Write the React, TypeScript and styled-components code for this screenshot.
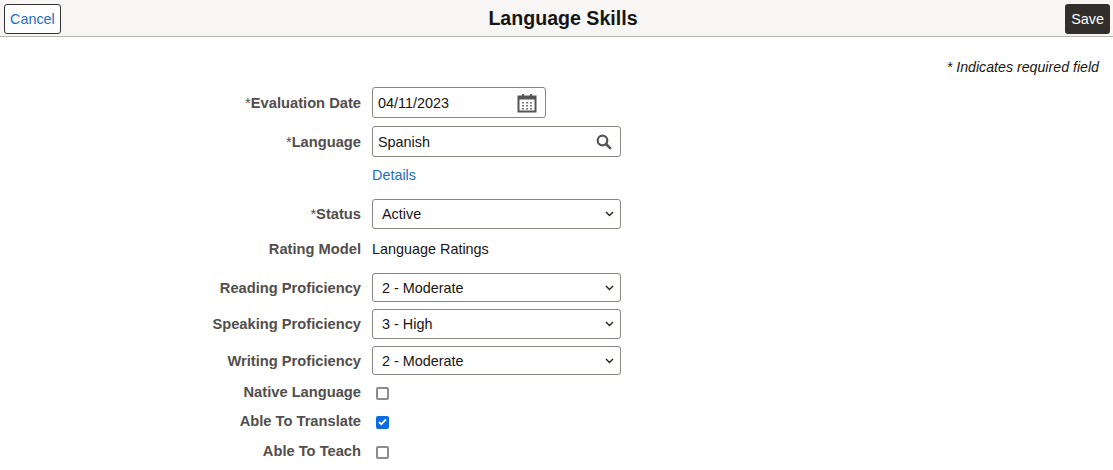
import React from 'react';
import styled, { createGlobalStyle } from 'styled-components';

const GlobalStyle = createGlobalStyle`
  html, body {
    margin: 0;
    padding: 0;
    background: #ffffff;
    font-family: "Liberation Sans", Arial, sans-serif;
    font-size: 14.4px;
    color: #000;
  }
`;

interface Option {
  label: string;
  required?: boolean;
}

const Header = styled.header`
  display: flex;
  align-items: center;
  height: 37px;
  padding: 0 3px 0 4px;
  background: #f7f6f5;
  border-bottom: 1px solid #b8b6b3;
  box-sizing: border-box;
`;

const CancelButton = styled.button`
  height: 30px;
  padding: 0 5px;
  margin-top: 1px;
  background: #ffffff;
  border: 1px solid #333333;
  border-radius: 3px;
  color: #1f6ec4;
  font-family: inherit;
  font-size: 14.4px;
`;

const SaveButton = styled.button`
  height: 30px;
  padding: 0 6px;
  margin-top: 1px;
  background: #312e2b;
  border: none;
  border-radius: 3px;
  color: #ffffff;
  font-family: inherit;
  font-size: 14.4px;
`;

const Title = styled.h1`
  flex: 1;
  margin: 0;
  text-align: center;
  font-size: 19.6px;
  font-weight: bold;
  color: #161513;
`;

const Note = styled.div`
  padding: 22px 14px 0 0;
  text-align: right;
  font-style: italic;
  font-size: 14.2px;
  color: #161513;
`;

const Form = styled.div`
  display: flex;
  flex-direction: column;
`;

const Row = styled.div<{ $top: number; $height: number }>`
  display: grid;
  grid-template-columns: 361px 1fr;
  column-gap: 11px;
  align-items: center;
  margin-top: ${(p) => p.$top}px;
  height: ${(p) => p.$height}px;
`;

const Label = styled.div`
  text-align: right;
  font-weight: bold;
  font-size: 14.7px;
  color: #514e4b;
  white-space: nowrap;
`;

const Star = styled.span`
  font-weight: normal;
`;

const Field = styled.div<{ $width: number }>`
  position: relative;
  display: flex;
  align-items: center;
  width: ${(p) => p.$width}px;
  height: 100%;
  box-sizing: border-box;
  border: 1px solid #8a8580;
  border-radius: 3px;
  background: #fff;
`;

const FieldText = styled.span<{ $pad: number }>`
  flex: 1;
  padding-left: ${(p) => p.$pad}px;
  color: #161513;
`;

const IconSlot = styled.span`
  display: flex;
  align-items: center;
  padding-right: 8px;
`;

const Chevron = styled.svg`
  position: absolute;
  right: 6px;
  top: 50%;
  margin-top: -3px;
`;

const Value = styled.span`
  color: #161513;
`;

const Link = styled.a`
  color: #1f6ec4;
  text-decoration: none;
`;

const Check = styled.span<{ $on?: boolean }>`
  display: inline-flex;
  align-items: center;
  justify-content: center;
  width: 13px;
  height: 13px;
  margin-left: 4px;
  vertical-align: middle;
  box-sizing: border-box;
  border-radius: 2px;
  border: ${(p) => (p.$on ? 'none' : '2px solid #8b8b93')};
  background: ${(p) => (p.$on ? '#0b6be0' : '#ffffff')};
`;

const Calendar = () => (
  <svg width="20" height="20" viewBox="0 0 20 20">
    <rect x="1.5" y="3.5" width="17" height="15" fill="none" stroke="#555" strokeWidth="2" />
    <rect x="1.5" y="3.5" width="17" height="3" fill="#555" />
    <rect x="5" y="1" width="2" height="4" fill="#555" />
    <rect x="13" y="1" width="2" height="4" fill="#555" />
    {[6, 9, 12].map((y) =>
      [5, 9, 13].map((x) => <rect key={`${x}-${y}`} x={x} y={y + 3} width="2" height="1.5" fill="#777" />)
    )}
  </svg>
);

const Search = () => (
  <svg width="16" height="16" viewBox="0 0 16 16">
    <circle cx="6.5" cy="6.5" r="4.8" fill="none" stroke="#555" strokeWidth="2.2" />
    <line x1="10" y1="10" x2="14.2" y2="14.2" stroke="#555" strokeWidth="2.6" strokeLinecap="round" />
  </svg>
);

const Select = ({ value }: { value: string }) => (
  <Field $width={249}>
    <FieldText $pad={9}>{value}</FieldText>
    <Chevron width="9" height="6" viewBox="0 0 9 6">
      <path d="M1 1l3.5 3.5L8 1" fill="none" stroke="#222" strokeWidth="1.4" />
    </Chevron>
  </Field>
);

const FormLabel = ({ label, required }: Option) => (
  <Label>
    {required && <Star>*</Star>}
    {label}
  </Label>
);

const App: React.FC = () => {
  return (
    <>
      <GlobalStyle />
      <Header>
        <CancelButton>Cancel</CancelButton>
        <Title>Language Skills</Title>
        <SaveButton>Save</SaveButton>
      </Header>
      <Note>* Indicates required field</Note>
      <Form>
        <Row $top={12} $height={31}>
          <FormLabel label="Evaluation Date" required />
          <Field $width={174}>
            <FieldText $pad={5}>04/11/2023</FieldText>
            <IconSlot><Calendar /></IconSlot>
          </Field>
        </Row>
        <Row $top={8} $height={31}>
          <FormLabel label="Language" required />
          <Field $width={249}>
            <FieldText $pad={5}>Spanish</FieldText>
            <IconSlot><Search /></IconSlot>
          </Field>
        </Row>
        <Row $top={3} $height={30}>
          <div />
          <div><Link href="#">Details</Link></div>
        </Row>
        <Row $top={9} $height={30}>
          <FormLabel label="Status" required />
          <Select value="Active" />
        </Row>
        <Row $top={5} $height={30}>
          <FormLabel label="Rating Model" />
          <Value>Language Ratings</Value>
        </Row>
        <Row $top={9} $height={29}>
          <FormLabel label="Reading Proficiency" />
          <Select value="2 - Moderate" />
        </Row>
        <Row $top={7} $height={30}>
          <FormLabel label="Speaking Proficiency" />
          <Select value="3 - High" />
        </Row>
        <Row $top={7} $height={29}>
          <FormLabel label="Writing Proficiency" />
          <Select value="2 - Moderate" />
        </Row>
        <Row $top={3} $height={28}>
          <FormLabel label="Native Language" />
          <div><Check /></div>
        </Row>
        <Row $top={1} $height={28}>
          <FormLabel label="Able To Translate" />
          <div>
            <Check $on>
              <svg width="9" height="8" viewBox="0 0 9 8">
                <path d="M1 4l2.3 2.3L8 1.3" fill="none" stroke="#fff" strokeWidth="1.8" />
              </svg>
            </Check>
          </div>
        </Row>
        <Row $top={2} $height={28}>
          <FormLabel label="Able To Teach" />
          <div><Check /></div>
        </Row>
      </Form>
    </>
  );
};

export default App;
